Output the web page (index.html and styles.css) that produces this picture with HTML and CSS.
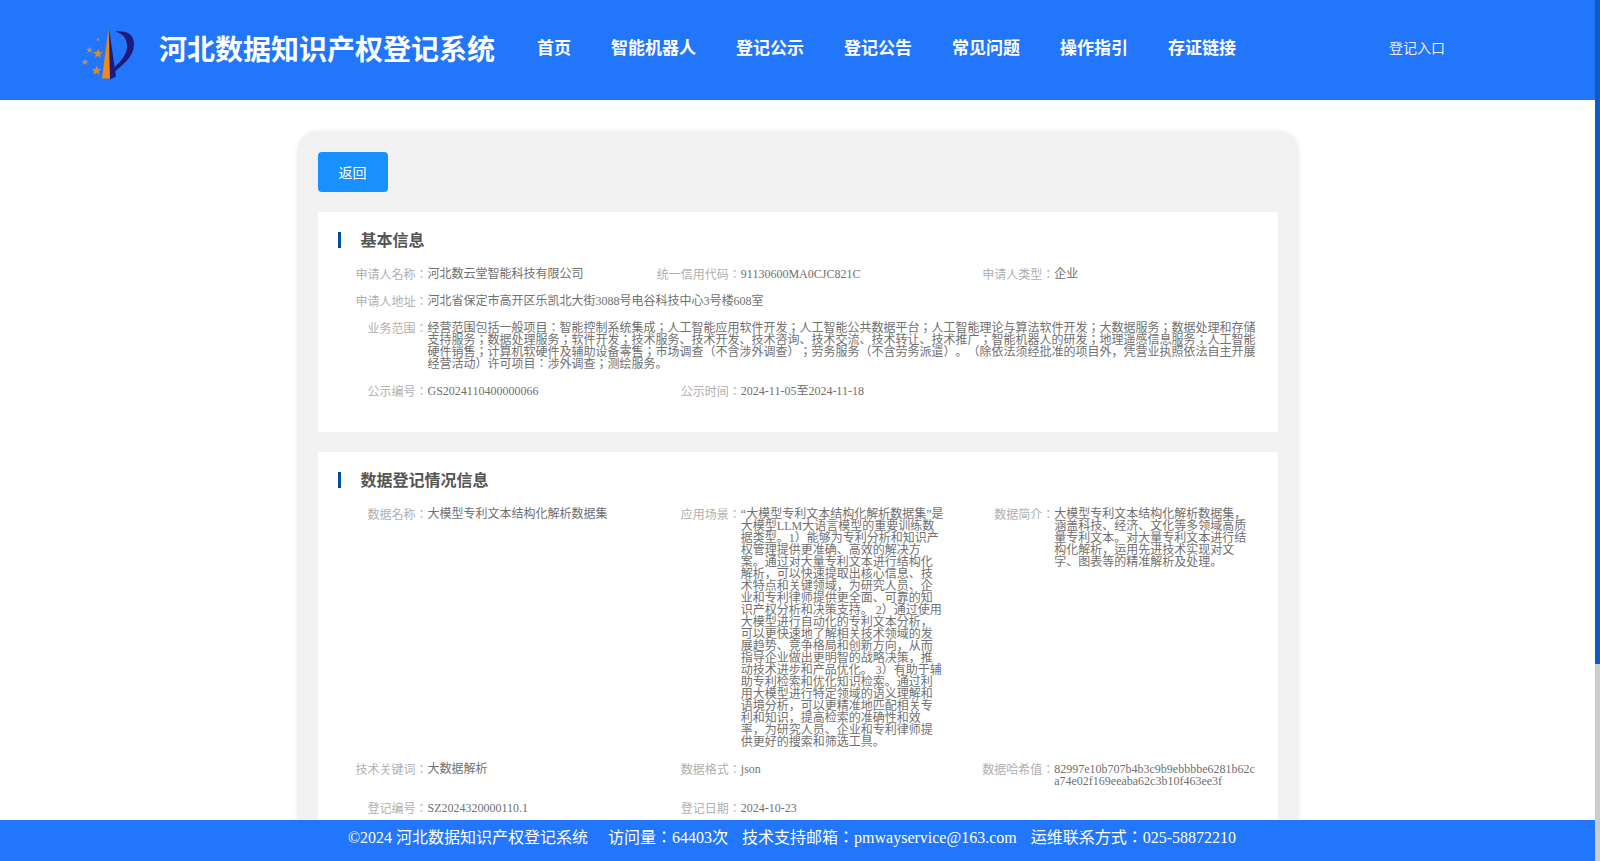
FILE: index.html
```html
<!DOCTYPE html>
<html>

<head>
    <meta charset="UTF-8">
    <meta name="viewport" content="width=device-width, initial-scale=1.0">
    <title>河北数据知识产权登记系统</title>
    <link rel="stylesheet" href="styles.css">
</head>

<body>
    <div class="header">
        <svg class="logo" viewBox="0 -2.5 70 65" width="70" height="65">
            <defs>
                <polygon id="star" points="0,-5 1.3,-1.6 5,-1.5 2.1,.7 3.1,4.3 0,2.2 -3.1,4.3 -2.1,.7 -5,-1.5 -1.3,-1.6" />
            </defs>
            <polygon points="28.5,8 22,58 30,58" fill="#ee8a1d" />
            <polygon points="29,8 36,56 30,59" fill="#1f1a78" />
            <path d="M35,11 C46,10 54,13 54,24 C54,36 43,44 35,51 L35,46 C42,40 48,32 47,24 C46,16 42,13 35,11 Z" fill="#1f1a78" />
            <use href="#star" x="18" y="33" fill="#d98a35" />
            <use href="#star" x="16.5" y="50" fill="#d98a35" />
            <use href="#star" x="9.5" y="29.5" fill="#c08f55" transform="translate(9.5 29.5) scale(.7) translate(-9.5 -29.5)" />
            <use href="#star" x="5" y="41.5" fill="#c08f55" transform="translate(5 41.5) scale(.7) translate(-5 -41.5)" />
            <use href="#star" x="18" y="19" fill="#b98d55" transform="translate(18 19) scale(.4) translate(-18 -19)" />
        </svg>
        <div class="title">河北数据知识产权登记系统</div>
        <ul class="nav">
            <li>首页</li>
            <li>智能机器人</li>
            <li>登记公示</li>
            <li>登记公告</li>
            <li>常见问题</li>
            <li>操作指引</li>
            <li>存证链接</li>
        </ul>
        <a class="login" href="#">登记入口</a>
    </div>

    <div class="panel">
        <button class="backBtn">返回</button>

        <div class="card">
            <h3 class="cardTitle">基本信息</h3>
            <div class="fields">
                <div class="field"><span class="label">申请人名称：</span><span class="value">河北数云堂智能科技有限公司</span></div>
                <div class="field"><span class="label">统一信用代码：</span><span class="value">91130600MA0CJC821C</span></div>
                <div class="field"><span class="label">申请人类型：</span><span class="value">企业</span></div>
                <div class="field full"><span class="label">申请人地址：</span><span class="value">河北省保定市高开区乐凯北大街3088号电谷科技中心3号楼608室</span></div>
                <div class="field full"><span class="label">业务范围：</span><span class="value">经营范围包括一般项目：智能控制系统集成；人工智能应用软件开发；人工智能公共数据平台；人工智能理论与算法软件开发；大数据服务；数据处理和存储支持服务；数据处理服务；软件开发；技术服务、技术开发、技术咨询、技术交流、技术转让、技术推广；智能机器人的研发；地理遥感信息服务；人工智能硬件销售；计算机软硬件及辅助设备零售；市场调查（不含涉外调查）；劳务服务（不含劳务派遣）。（除依法须经批准的项目外，凭营业执照依法自主开展经营活动）许可项目：涉外调查；测绘服务。</span></div>
                <div class="field"><span class="label">公示编号：</span><span class="value">GS2024110400000066</span></div>
                <div class="field"><span class="label">公示时间：</span><span class="value">2024-11-05至2024-11-18</span></div>
            </div>
        </div>

        <div class="card">
            <h3 class="cardTitle">数据登记情况信息</h3>
            <div class="fields">
                <div class="field"><span class="label">数据名称：</span><span class="value">大模型专利文本结构化解析数据集</span></div>
                <div class="field"><span class="label">应用场景：</span><span class="value">“大模型专利文本结构化解析数据集”是大模型LLM大语言模型的重要训练数据类型。1）能够为专利分析和知识产权管理提供更准确、高效的解决方案。通过对大量专利文本进行结构化解析，可以快速提取出核心信息、技术特点和关键领域，为研究人员、企业和专利律师提供更全面、可靠的知识产权分析和决策支持。 2）通过使用大模型进行自动化的专利文本分析，可以更快速地了解相关技术领域的发展趋势、竞争格局和创新方向，从而指导企业做出更明智的战略决策，推动技术进步和产品优化。 3）有助于辅助专利检索和优化知识检索。通过利用大模型进行特定领域的语义理解和语境分析，可以更精准地匹配相关专利和知识，提高检索的准确性和效率，为研究人员、企业和专利律师提供更好的搜索和筛选工具。</span></div>
                <div class="field"><span class="label">数据简介：</span><span class="value">大模型专利文本结构化解析数据集，涵盖科技、经济、文化等多领域高质量专利文本。对大量专利文本进行结构化解析，运用先进技术实现对文字、图表等的精准解析及处理。</span></div>
                <div class="field"><span class="label">技术关键词：</span><span class="value">大数据解析</span></div>
                <div class="field"><span class="label">数据格式：</span><span class="value">json</span></div>
                <div class="field"><span class="label">数据哈希值：</span><span class="value">82997e10b707b4b3c9b9ebbbbe6281b62ca74e02f169eeaba62c3b10f463ee3f</span></div>
                <div class="field"><span class="label">登记编号：</span><span class="value">SZ2024320000110.1</span></div>
                <div class="field"><span class="label">登记日期：</span><span class="value">2024-10-23</span></div>
            </div>
        </div>
    </div>

    <div class="footer">
        <span class="first">©2024 河北数据知识产权登记系统</span>
        <span>访问量：64403次</span>
        <span>技术支持邮箱：pmwayservice@163.com</span>
        <span>运维联系方式：025-58872210</span>
    </div>

    <!-- scrollbar of the page, headless browser hides the real one -->
    <div class="scrollTrack">
        <div class="scrollThumb"></div>
    </div>
</body>

</html>
```

FILE: styles.css
```css
* {
    margin: 0;
    padding: 0;
    list-style: none;
    box-sizing: border-box;
}

body {
    padding-right: 5px;
    font-family: "Liberation Serif", "Noto Sans CJK JP", serif;
    text-spacing-trim: space-all;
    background: #fff;
}

.header {
    display: flex;
    align-items: center;
    height: 100px;
    padding: 0 150px 0 80px;
    background: #2176fb;
    color: #fff;
    font-family: "Noto Sans CJK SC", "Noto Sans", sans-serif;
}

.logo {
    flex-shrink: 0;
    margin-right: 9px;
}

.title {
    margin-bottom: 4px;
    font-size: 28px;
    font-weight: 600;
    white-space: nowrap;
}

.nav {
    display: flex;
    gap: 40px;
    margin-left: 42px;
    margin-bottom: 8px;
    font-size: 17px;
    font-weight: 600;
}

.login {
    margin-left: auto;
    margin-bottom: 6px;
    font-size: 14px;
    color: #eee;
    text-decoration: none;
}

.panel {
    width: 1000px;
    min-height: 950px;
    margin: 32px auto 34px;
    padding: 20px;
    background: #f1f1f1;
    border-radius: 20px;
    box-shadow: 0 0 5px rgba(0, 0, 0, .12);
}

.backBtn {
    display: block;
    width: 70px;
    height: 40px;
    margin-bottom: 20px;
    border: 0;
    border-radius: 4px;
    background: #1890ff;
    color: #fff;
    font-size: 14px;
    font-family: "Noto Sans CJK SC", sans-serif;
}

.card {
    margin-bottom: 20px;
    padding: 20px 0 20px 20px;
    background: #fff;
}

.cardTitle {
    height: 16px;
    margin-bottom: 20px;
    padding-left: 20px;
    border-left: 3px solid #004c97;
    color: #555;
    font-size: 16px;
    line-height: 14px;
    font-weight: 600;
    font-family: "Noto Sans CJK SC", sans-serif;
}

.fields {
    display: grid;
    grid-template-columns: repeat(3, 1fr);
}

.field {
    display: flex;
    padding-right: 20px;
    margin-bottom: 15px;
    font-size: 12px;
    line-height: 12px;
}

.field.full {
    grid-column: 1 / -1;
}

.label {
    flex-shrink: 0;
    width: 90px;
    padding-top: 1px;
    margin-bottom: -1px;
    text-align: right;
    color: #b0b0b0;
    white-space: nowrap;
}

.value {
    flex: 1;
    min-width: 0;
    color: #707070;
    word-break: break-all;
}

.footer {
    position: fixed;
    left: 0;
    right: 5px;
    bottom: 0;
    display: flex;
    justify-content: center;
    gap: 14px;
    height: 41px;
    padding-right: 11px;
    background: #2176fb;
    color: #fff;
    font-size: 16px;
    line-height: 36px;
}

.footer .first {
    margin-right: 6px;
}

.scrollTrack {
    position: fixed;
    top: 0;
    right: 0;
    bottom: 0;
    width: 5px;
    background: #ccc;
}

.scrollThumb {
    height: 664px;
    background: #0a5cc9;
}
```
